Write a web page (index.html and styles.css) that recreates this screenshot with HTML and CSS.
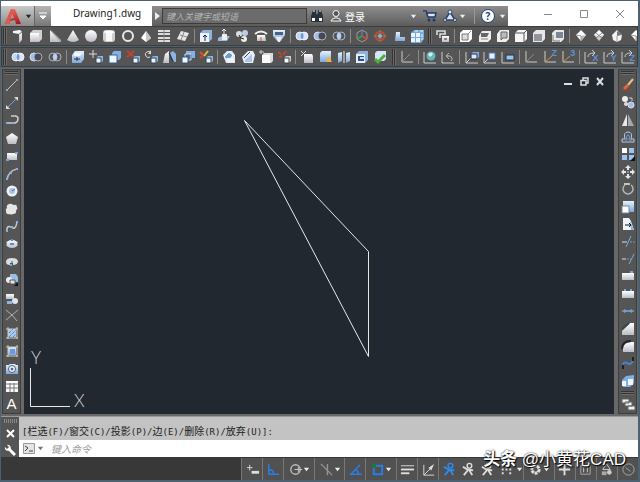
FILE: index.html
```html
<!DOCTYPE html>
<html lang="zh-CN">
<head>
  <meta charset="UTF-8">
  <meta name="viewport" content="width=device-width, initial-scale=1.0">
  <title>Drawing1.dwg</title>
  <link rel="stylesheet" href="styles.css">
</head>
<body>
  <!-- 图标库 -->
  <svg class="sprite" aria-hidden="true">
    <defs>
      <linearGradient id="g" x1="0" y1="0" x2="0" y2="1"><stop offset="0" stop-color="#fff"/><stop offset="1" stop-color="#b9bdc4"/></linearGradient>
      <linearGradient id="b" x1="0" y1="0" x2="0" y2="1"><stop offset="0" stop-color="#e4f1ff"/><stop offset="1" stop-color="#7fa8d8"/></linearGradient>
      <linearGradient id="r" x1="0" y1="0" x2="0" y2="1"><stop offset="0" stop-color="#ef6a5f"/><stop offset="1" stop-color="#a81618"/></linearGradient>
    </defs>
    <!-- 实体 -->
    <symbol id="polysolid" viewBox="0 0 16 16"><path d="M3 3l7-1 2 2v8l-3 3V6L3 5z" fill="url(#g)"/><path d="M9 6l3-2" stroke="#777"/></symbol>
    <symbol id="box" viewBox="0 0 16 16"><path d="M2 5l3-3h9v9l-3 3H2z" fill="#d0d0d0"/><path d="M2 5h9v9H2z" fill="url(#g)"/></symbol>
    <symbol id="wedge" viewBox="0 0 16 16"><path d="M3 2l11 12H3z" fill="url(#g)"/><path d="M3 2l2 1 9 9v2z" fill="#aaa"/></symbol>
    <symbol id="cone" viewBox="0 0 16 16"><path d="M8 2l6 10q-6 4-12 0z" fill="url(#g)"/></symbol>
    <symbol id="sphere" viewBox="0 0 16 16"><circle cx="8" cy="8" r="6" fill="url(#g)"/></symbol>
    <symbol id="cylinder" viewBox="0 0 16 16"><rect x="2" y="2" width="12" height="12" rx="3" fill="#cfcfcf"/><path d="M5 5h6v8H5z" fill="#f8f8f8"/><ellipse cx="8" cy="4" rx="5" ry="1.5" fill="#fff"/></symbol>
    <symbol id="torus" viewBox="0 0 16 16"><circle cx="8" cy="8" r="5" fill="none" stroke="#e8e8e8" stroke-width="2"/></symbol>
    <symbol id="pyramid" viewBox="0 0 16 16"><path d="M8 3l5 7-5 4-5-4z" fill="#fff"/><path d="M8 3l5 7-5 4z" fill="#c6c6c6"/></symbol>
    <symbol id="helix" viewBox="0 0 16 16"><path d="M2 3h12M2 6h12M2 10h12M2 13h12" stroke="#ddd" stroke-width="2"/><path d="M8 2v12" stroke="#888"/></symbol>
    <symbol id="planar" viewBox="0 0 16 16"><path d="M6 3l8 2-4 8-8-2z" fill="#e8e8e8"/><path d="M9 4l-3 8M5 7l7 2" stroke="#888" fill="none"/></symbol>
    <symbol id="extrude" viewBox="0 0 16 16"><path d="M2 5l3-3h9v9l-3 3H2z" fill="#8db4df"/><path d="M2 5h9v9H2z" fill="#e9f4ff"/><path d="M7 13V7M5 9l2-2 2 2" stroke="#224" fill="none"/></symbol>
    <symbol id="presspull" viewBox="0 0 16 16"><path d="M2 10l4-2h8l-3 5H2z" fill="#9dbbe0"/><path d="M6 6h5v6H6z" fill="#eee"/><path d="M8 6V1M6 3l2-2 2 2" stroke="#e8e8e8" fill="none"/></symbol>
    <symbol id="sweep" viewBox="0 0 16 16"><circle cx="5" cy="6" r="3" fill="#ddd"/><circle cx="11" cy="5" r="3" fill="#b8cde6"/><circle cx="10" cy="11" r="3" fill="#eee"/><path d="M5 7q1 4 5 4" stroke="#222" fill="none"/></symbol>
    <symbol id="revolve" viewBox="0 0 16 16"><path d="M2 6q6-5 12 0" stroke="#eee" stroke-width="2" fill="none"/><path d="M4 7h8l1 6H4z" fill="url(#g)"/><path d="M8 9v4" stroke="#db5b3b"/></symbol>
    <symbol id="loft" viewBox="0 0 16 16"><path d="M2 2h12v5l-4 6H6L2 8z" fill="url(#b)"/><path d="M4 4h8v3H4z" fill="#49627f"/><path d="M5 9h6l-2 5H7z" fill="#eee"/></symbol>
    <symbol id="union" viewBox="0 0 16 16"><circle cx="6" cy="8" r="4" fill="#bdd6f3" stroke="#eef"/><circle cx="10" cy="8" r="4" fill="#d7e7fa" stroke="#eef"/><ellipse cx="8" cy="8" rx="1.5" ry="3" fill="#6f9bd0"/></symbol>
    <symbol id="subtract" viewBox="0 0 16 16"><circle cx="6" cy="8" r="4" fill="#9dbfea" stroke="#dde"/><circle cx="10" cy="8" r="4" fill="#444a55" stroke="#aab"/></symbol>
    <symbol id="intersect" viewBox="0 0 16 16"><circle cx="6" cy="8" r="4" fill="none" stroke="#a8b3c8"/><circle cx="10" cy="8" r="4" fill="none" stroke="#a8b3c8"/><ellipse cx="8" cy="8" rx="2" ry="3" fill="#b7d3f5"/></symbol>
    <symbol id="gizmo-move" viewBox="0 0 16 16"><path d="M8 2l5 3v6l-5 3-5-3V5z" fill="none" stroke="#9a9a9a"/><path d="M8 8V3" stroke="#5a8cff"/><path d="M8 8l5 3" stroke="#e04030" stroke-width="2"/><path d="M8 8l-5 3" stroke="#38a048" stroke-width="2"/></symbol>
    <symbol id="gizmo-rotate" viewBox="0 0 16 16"><circle cx="8" cy="8" r="4.500" fill="none" stroke="#d84432" stroke-width="1.500"/><ellipse cx="8" cy="8" rx="6" ry="2.500" fill="none" stroke="#cf4a37"/><path d="M8 2v12M2 8h12" stroke="#4ba35a"/><circle cx="8" cy="8" r="2" fill="#9ac"/></symbol>
    <symbol id="align" viewBox="0 0 16 16"><path d="M6 4h4v5h5v4H5z" fill="url(#b)"/></symbol>
    <symbol id="array3d" viewBox="0 0 16 16"><path d="M2 5l3-3h10v9l-3 4H2z" fill="#79a8dd"/><path d="M2 5h4v4H2zM7 5h4v4H7zM2 10h4v4H2zM7 10h4v4H7z" fill="#eaf4ff"/><path d="M6 3h3M11 3h3M13 6v3M13 10v2" stroke="#dff"/></symbol>
    <!-- 视图 -->
    <symbol id="views" viewBox="0 0 16 16"><path d="M2 7V3h8v3M5 10V6h6" fill="none" stroke="#ddd" stroke-width="1.500"/><path d="M7 8h7v6H7z" fill="url(#g)"/><path d="M9 10h3v2H9z" fill="#888"/></symbol>
    <symbol id="vtop" viewBox="0 0 16 16"><path d="M2 5l3-3h9v9l-3 3H2z" fill="#fff"/><path d="M4 6h6v6H4z" fill="#dcdcdc" stroke="#777"/><path d="M10 6l3-3" stroke="#888"/></symbol>
    <symbol id="vbottom" viewBox="0 0 16 16"><path d="M2 8l3-5h9v8l-3 3H2z" fill="#eee"/><path d="M4 5h8l-2 4H4z" fill="#666"/><path d="M4 11h7" stroke="#888"/></symbol>
    <symbol id="vleft" viewBox="0 0 16 16"><path d="M2 6l3-4h9v9l-3 3H2z" fill="#eee"/><path d="M6 4h6v6H8l-2 2z" fill="#bbb" stroke="#666"/></symbol>
    <symbol id="vfront" viewBox="0 0 16 16"><path d="M2 5l3-3h9v9l-3 3H2z" fill="#f5f5f5"/><path d="M2 5h9v9M11 5l3-3" stroke="#555" fill="none"/></symbol>
    <symbol id="vback" viewBox="0 0 16 16"><path d="M2 5l3-3h9v9l-3 3H2z" fill="#e8e8e8"/><path d="M3 6h8v7H3z" fill="#8f959b"/></symbol>
    <symbol id="vright" viewBox="0 0 16 16"><path d="M2 5l3-3h9v9l-3 3H2z" fill="#e8e8e8"/><path d="M6 4h7v6H6z" fill="#7b8793"/><path d="M3 7v6h7" stroke="#777" fill="none"/></symbol>
    <symbol id="sw" viewBox="0 0 16 16"><path d="M8 2l5 5-5 6-5-6z" fill="#fff"/><path d="M8 8l5-1-5 6z" fill="#b8b8b8"/><path d="M3 7l5 1v5" stroke="#999" fill="none"/></symbol>
    <symbol id="se" viewBox="0 0 16 16"><path d="M8 2l5 5-5 6-5-6z" fill="#ccc"/><path d="M8 2l5 5-5 1-5-1z" fill="#fff"/><path d="M5 5l6 5M11 5l-6 5" stroke="#888"/></symbol>
    <symbol id="ne" viewBox="0 0 16 16"><path d="M8 2l5 5-1 5-4 2-4-2-1-5z" fill="#f3f3f3"/><path d="M8 3v5l5-1-1-2z" fill="#777"/><path d="M8 8v6" stroke="#999"/></symbol>
    <!-- 实体编辑 -->
    <symbol id="facex" viewBox="0 0 16 16"><path d="M2 6l3-4h9v8l-3 4H2z" fill="url(#b)"/><path d="M4 4h8l-2 3H4z" fill="#f4f8ff"/><path d="M4 10h6M7 8v4" stroke="#234"/></symbol>
    <symbol id="facemove" viewBox="0 0 16 16"><path d="M5 1v8M1 5h8" stroke="#ddd"/><path d="M8 9l2-2h5v5l-2 2H8z" fill="#8bb4e4"/><path d="M8 9h5v5H8z" fill="#eef6ff" stroke="#345"/></symbol>
    <symbol id="faceoffset" viewBox="0 0 16 16"><path d="M5 4l2-2h7v7l-2 2H5z" fill="#83b0e6"/><path d="M2 6h8v8H2z" fill="#f0f7ff" stroke="#3f5f86"/></symbol>
    <symbol id="facedel" viewBox="0 0 16 16"><path d="M2 2l7 6M9 2L2 8" stroke="#c0442f" stroke-width="2"/><path d="M8 9l2-2h5v5l-2 2H8z" fill="#8bb4e4"/><path d="M8 9h5v5H8z" fill="#eef6ff" stroke="#345"/></symbol>
    <symbol id="facerot" viewBox="0 0 16 16"><path d="M8 4a3 3 0 1 0-1 4" stroke="#ddd" fill="none"/><path d="M8 1v4H5" fill="#ddd"/><path d="M8 9l2-2h5v5l-2 2H8z" fill="#8bb4e4"/><path d="M8 9h5v5H8z" fill="#eef6ff" stroke="#345"/></symbol>
    <symbol id="facetaper" viewBox="0 0 16 16"><path d="M2 14l2-9 4-3v12z" fill="url(#g)"/><path d="M9 4l4 9h2V5l-3-3z" fill="#8bb4e4"/><path d="M8 4l4 9" stroke="#234"/></symbol>
    <symbol id="facecopy" viewBox="0 0 16 16"><path d="M6 2h9v7h-3V5H6z" fill="#83b0e6"/><path d="M5 5h6v6H5z" fill="#4b6b94" stroke="#cde"/><path d="M2 8h6v6H2z" fill="#f0f7ff" stroke="#357"/></symbol>
    <symbol id="facecolor" viewBox="0 0 16 16"><path d="M2 3l3 3" stroke="#e04d31" stroke-width="2"/><path d="M6 7l4-5" stroke="#e8b93c" stroke-width="2"/><path d="M2 9l3-2" stroke="#d0432c" stroke-width="2"/><path d="M8 9l2-2h5v5l-2 2H8z" fill="#8bb4e4"/><path d="M8 9h5v5H8z" fill="#eef6ff" stroke="#345"/></symbol>
    <symbol id="edgecolor" viewBox="0 0 16 16"><path d="M2 3l3 2M3 8l3-1" stroke="#d0432c" stroke-width="2"/><path d="M7 6l3-4" stroke="#c0442f" stroke-width="2"/><path d="M8 9l2-2h5v5l-2 2H8z" fill="#ccc"/><path d="M8 9h5v5H8z" fill="#fff" stroke="#345"/></symbol>
    <symbol id="edgefillet" viewBox="0 0 16 16"><path d="M2 6l4-4h5l3 4v8H5z" fill="#dbe9fb"/><path d="M3 8l5-5 4 3-4 6z" fill="#6f9dd3" stroke="#fff"/><path d="M6 9h7v4H6z" fill="#f3f3f3"/></symbol>
    <symbol id="edgechamfer" viewBox="0 0 16 16"><path d="M2 8l6-6h5l2 4-2 8H4z" fill="#e5eefa"/><path d="M4 9l6-6" stroke="#345"/><path d="M5 11l7-6v8H5z" fill="#a9c5e8"/></symbol>
    <symbol id="imprint" viewBox="0 0 16 16"><path d="M1 3h5M3 1v4" stroke="#ccc"/><path d="M4 6l2-2h9v8l-2 2H4z" fill="#ddd"/><path d="M4 6h8v8H4z" fill="#fff"/></symbol>
    <symbol id="clean" viewBox="0 0 16 16"><path d="M2 2l5 5M7 2L2 7" stroke="#ddd"/><path d="M5 5h8l1 2v7H5z" fill="url(#g)"/></symbol>
    <symbol id="separate" viewBox="0 0 16 16"><path d="M2 4l2-2h9v9l-2 2H2z" fill="url(#b)"/><path d="M11 7l3 6H8z" fill="#f0b43c"/></symbol>
    <symbol id="section" viewBox="0 0 16 16"><path d="M2 4l4-1v9l-4 2zM10 4l4-1v9l-4 2z" fill="url(#b)"/><path d="M8 2v12" stroke="#eee"/></symbol>
    <symbol id="shell" viewBox="0 0 16 16"><path d="M2 5l3-3h9v9l-3 3H2z" fill="#8db4df"/><path d="M2 5h9v9H2z" fill="#e3effd"/><path d="M4 7h6v5H4z" fill="#2f5385"/><path d="M6 8h4v2H6z" fill="#cde"/></symbol>
    <symbol id="check" viewBox="0 0 16 16"><path d="M3 4l2-2h9v8l-2 2H3z" fill="#d5e6fa"/><path d="M3 10l3 3 7-7" stroke="#4fae3a" stroke-width="3" fill="none"/></symbol>
    <!-- 坐标系 -->
    <symbol id="axes" viewBox="0 0 16 16"><path d="M3 2v11h11" stroke="#ccc" fill="none"/><path d="M3 13l8-8" stroke="#888"/></symbol>
    <symbol id="ucsworld" viewBox="0 0 16 16"><path d="M2 3v11h12" stroke="#ccc" fill="none"/><circle cx="9" cy="7" r="4.500" fill="#64b5bd"/><path d="M6 5q3-3 5 0-2 4-4 2z" fill="#d2f0e6"/></symbol>
    <symbol id="ucsprev" viewBox="0 0 16 16"><path d="M2 3v11h12" stroke="#ccc" fill="none"/><path d="M6 7h4a3 3 0 0 1 1 5M9 4L6 7l3 3" stroke="#bbb" fill="none"/></symbol>
    <symbol id="ucsface" viewBox="0 0 16 16"><path d="M2 3v11h12M2 14l5-5" stroke="#ccc" fill="none"/><path d="M7 5l2-2h6v5l-2 2H7z" fill="#84aee0"/><path d="M7 5h6v5H7z" fill="#d9e9fc" stroke="#234"/></symbol>
    <symbol id="ucsobj" viewBox="0 0 16 16"><path d="M2 3v11h12M2 14l4-4" stroke="#ccc" fill="none"/><path d="M7 4h6v6H7z" fill="#e8f2ff" stroke="#4c80c4"/></symbol>
    <symbol id="ucsview" viewBox="0 0 16 16"><path d="M2 3v11h12" stroke="#ccc" fill="none"/><path d="M6 6h8v5H6z" fill="#98c6f5" stroke="#234"/></symbol>
    <symbol id="ucsz" viewBox="0 0 16 16"><path d="M3 2v11h11" stroke="#ccc" fill="none"/><path d="M3 13l7-6" stroke="#c79838"/></symbol>
    <symbol id="ucsrot" viewBox="0 0 16 16"><path d="M2 3v11h12" stroke="#ccc" fill="none"/><path d="M5 8q0-4 6-4M9 1l3 3-3 3" stroke="#ccc" fill="none"/></symbol>
    <!-- 绘图 -->
    <symbol id="line" viewBox="0 0 16 16"><path d="M3 13L13 3" stroke="#c8c8c8"/><path d="M2 13h2M12 3h2" stroke="#7da7dd" stroke-width="2"/></symbol>
    <symbol id="xline" viewBox="0 0 16 16"><path d="M4 12l8-8" stroke="#6f9fdc"/><path d="M2 14v-4l4 4zM14 2v4l-4-4z" fill="#ddd"/></symbol>
    <symbol id="pline" viewBox="0 0 16 16"><path d="M7 4h4q3 0 3 3t-3 4H3" stroke="#ccc" stroke-width="1.500" fill="none"/><path d="M2 11h2M8 11h2" stroke="#7fb0ec" stroke-width="2"/></symbol>
    <symbol id="polygon" viewBox="0 0 16 16"><path d="M8 3l6 4-2 7H4L2 7z" fill="url(#g)"/></symbol>
    <symbol id="rect" viewBox="0 0 16 16"><path d="M3 5h10v7H3z" fill="url(#g)"/><path d="M2 12h3M11 5h3" stroke="#70a2e2" stroke-width="2"/></symbol>
    <symbol id="arc" viewBox="0 0 16 16"><path d="M3 14Q4 5 13 3" stroke="#bbb" fill="none" stroke-width="1.500"/><path d="M2 13h2M6 7h2M12 3h2" stroke="#7fb0ec" stroke-width="2"/></symbol>
    <symbol id="circle" viewBox="0 0 16 16"><circle cx="8" cy="8" r="5.500" fill="#eef1f6"/><circle cx="8" cy="8" r="3" fill="#a8c4e8"/><path d="M8 8l3-2" stroke="#56a"/></symbol>
    <symbol id="cloud" viewBox="0 0 16 16"><path d="M5 3q3-1 4 1 4-1 4 2 1 3-1 3 1 4-3 4-2 1-3 0-4 1-4-3-1-2 1-3-1-3 2-4z" fill="#e6e6e6"/></symbol>
    <symbol id="spline" viewBox="0 0 16 16"><path d="M3 13q-1-7 4-5 5 4 6-6" stroke="#ccc" stroke-width="1.500" fill="none"/><path d="M2 12h2M6 8h3M12 3h2" stroke="#7fb0ec" stroke-width="2"/></symbol>
    <symbol id="ellipse" viewBox="0 0 16 16"><ellipse cx="8" cy="8" rx="6" ry="4" fill="url(#g)"/><path d="M2 8h1M13 8h1M7 4h2M6 8h4" stroke="#5b8fd2" stroke-width="2"/></symbol>
    <symbol id="earc" viewBox="0 0 16 16"><path d="M2 8q0-4 6-4t6 4q-1 3-5 3V9H6v2Q2 11 2 8z" fill="#ddd"/><path d="M7 8h2M6 11h2" stroke="#78a5df" stroke-width="2"/></symbol>
    <symbol id="insert" viewBox="0 0 16 16"><path d="M6 2h6l2 3v5H6z" fill="#9dbce2"/><circle cx="5" cy="8" r="3" fill="#eee"/><path d="M6 8h5v4H6z" fill="#dfe9f7" stroke="#555"/><path d="M14 10v4h-4z" fill="#111"/></symbol>
    <symbol id="block" viewBox="0 0 16 16"><path d="M2 4h8v5H2z" fill="url(#g)"/><circle cx="11" cy="11" r="3" fill="#dfe6ef"/><path d="M3 11h5v3H3z" fill="#8fb4e3"/></symbol>
    <symbol id="point" viewBox="0 0 16 16"><path d="M2 3l6 5 5 6M14 3L8 8l-6 5" stroke="#a9b2b8" fill="none"/></symbol>
    <symbol id="hatch" viewBox="0 0 16 16"><path d="M4 4h8v8H4z" fill="#aacaf2"/><path d="M2 4h12M2 13h12M4 2v12M13 2v12" stroke="#cfcabc"/><path d="M5 8l4-4M5 12l7-7M9 12l3-3" stroke="#2d5fa8" stroke-dasharray="1 1"/></symbol>
    <symbol id="gradient" viewBox="0 0 16 16"><path d="M4 4h8v8H4z" fill="url(#b)"/><path d="M2 4h12M2 13h12M4 2v12M13 2v12" stroke="#cfcabc"/><path d="M6 6h5v5H6z" fill="#6c9ae0"/></symbol>
    <symbol id="region" viewBox="0 0 16 16"><path d="M2 4h3l1-1h5l1 1h2v9H2z" fill="url(#b)"/><circle cx="8" cy="8" r="3.500" fill="#fff" stroke="#37598a"/><circle cx="8" cy="8" r="1.500" fill="#667"/></symbol>
    <symbol id="table" viewBox="0 0 16 16"><path d="M2 3h12v11H2z" fill="#fafafa"/><path d="M2 6h12M2 10h12M6 5v9M10 5v9" stroke="#777"/></symbol>
    <!-- 修改 -->
    <symbol id="erase" viewBox="0 0 16 16"><path d="M8 8l5-6" stroke="#e9c27c" stroke-width="2"/><path d="M4 12l4-4" stroke="#e36a35" stroke-width="3"/><path d="M2 13h9" stroke="#b43a30"/></symbol>
    <symbol id="copy" viewBox="0 0 16 16"><circle cx="5" cy="5" r="3" fill="#eee"/><circle cx="11" cy="11" r="3" fill="#9dc0ec" stroke="#dde"/><circle cx="6" cy="10" r="2" fill="#ddd"/><path d="M9 4h3v3" stroke="#ccc" fill="none"/></symbol>
    <symbol id="mirror" viewBox="0 0 16 16"><path d="M7 2v12H2z" fill="#e9e9e9"/><path d="M8 2v12h6z" fill="#9fa9b4"/></symbol>
    <symbol id="offset" viewBox="0 0 16 16"><path d="M2 13h12v-3h-3q2-7-3-7T5 10H2z" fill="none" stroke="#b4c8e4"/><path d="M5 11h2q-1-5 1-5t1 5h3" stroke="#77a4df" fill="none"/></symbol>
    <symbol id="array" viewBox="0 0 16 16"><path d="M2 2h5v5H2z" fill="#fff"/><path d="M9 2h5v5H9zM2 9h5v5H2zM9 9h5v5H9z" fill="#9bc3f2"/><path d="M15 10v5h-5z" fill="#111"/></symbol>
    <symbol id="move" viewBox="0 0 16 16"><path d="M8 1l3 3H9v2H7V4H5zM8 15l3-3H9v-2H7v2H5zM1 8l3-3v2h2v2H4v2zM15 8l-3-3v2h-2v2h2v2z" fill="#e6e6e6"/><circle cx="8" cy="8" r="1" fill="#7aa9e2"/></symbol>
    <symbol id="rotate" viewBox="0 0 16 16"><path d="M5 4a5 5 0 1 0 6 0" stroke="#aeb6ba" stroke-width="1.500" fill="none"/><path d="M4 3h6" stroke="#c8c4b0" stroke-width="2"/></symbol>
    <symbol id="scale" viewBox="0 0 16 16"><path d="M3 2h11v11H3z" fill="url(#b)"/><path d="M2 7h7v7H2z" fill="#fff" stroke="#789"/></symbol>
    <symbol id="stretch" viewBox="0 0 16 16"><path d="M3 2h6l2 3 3 9H3z" fill="#eef4fc"/><path d="M10 4l4 10h-3z" fill="#8cb2e3"/><path d="M5 9h6M9 7l2 2-2 2" stroke="#111" fill="none"/></symbol>
    <symbol id="trim" viewBox="0 0 16 16"><path d="M2 8h5" stroke="#ddd"/><path d="M10 8h5" stroke="#7799bb" stroke-dasharray="2 1"/><path d="M6 13l5-11" stroke="#77a9e6"/></symbol>
    <symbol id="extend" viewBox="0 0 16 16"><path d="M2 8h4" stroke="#ddd"/><path d="M7 8h4" stroke="#79a" stroke-dasharray="2 1"/><path d="M9 13l5-10" stroke="#77a9e6"/></symbol>
    <symbol id="breakpt" viewBox="0 0 16 16"><path d="M2 5h12v7H2z" fill="url(#g)"/><path d="M10 4h3" stroke="#77a9e6" stroke-width="2"/></symbol>
    <symbol id="break" viewBox="0 0 16 16"><path d="M2 5h12v7H2z" fill="url(#g)"/><path d="M4 4h2M10 4h2" stroke="#77a9e6" stroke-width="2"/></symbol>
    <symbol id="join" viewBox="0 0 16 16"><path d="M2 8h12" stroke="#bbb"/><path d="M4 6l4 2-4 2zM12 6L8 8l4 2z" fill="#6ba0e6"/></symbol>
    <symbol id="chamfer" viewBox="0 0 16 16"><path d="M2 10l8-8h4v12H2z" fill="url(#g)"/><path d="M2 8l7-6" stroke="#345" stroke-width="2"/></symbol>
    <symbol id="fillet" viewBox="0 0 16 16"><path d="M3 14V10q1-6 8-6h3v10z" fill="url(#g)"/><path d="M2 11q0-8 9-8" stroke="#223" stroke-width="2" fill="none"/></symbol>
    <symbol id="blend" viewBox="0 0 16 16"><path d="M3 11q0-5 4-3 4 3 6-3" stroke="#4683d0" stroke-width="2" fill="none"/><path d="M3 10v4M13 6V2" stroke="#222" stroke-width="2"/></symbol>
    <symbol id="explode" viewBox="0 0 16 16"><path d="M2 7l4-4 8-1v8l-4 4H3z" fill="#82afe3"/><path d="M2 8h4v5H2zM8 6h5v6H8z" fill="#eef6ff"/></symbol>
    <symbol id="order" viewBox="0 0 16 16"><path d="M2 3h7v4H2zM5 6h7v4H5zM8 10h7v4H8z" fill="#eee" stroke="#666"/></symbol>
    <!-- 状态栏 -->
    <symbol id="dyn" viewBox="0 0 16 16"><path d="M2 6h6M5 3v6" stroke="#ddd"/><path d="M7 11h8" stroke="#ddd" stroke-width="3"/></symbol>
    <symbol id="ortho" viewBox="0 0 16 16"><path d="M3 2v11h11M3 8q5 0 5 5" stroke="#2a7de8" stroke-width="1.500" fill="none"/></symbol>
    <symbol id="polar" viewBox="0 0 16 16"><circle cx="8" cy="8" r="5" stroke="#bbb" fill="none" stroke-width="1.500"/><path d="M7 8h8M11 5v6" stroke="#ccc"/></symbol>
    <symbol id="iso" viewBox="0 0 16 16"><path d="M2 2l12 12M9 2v12" stroke="#8e9498" stroke-width="1.500"/></symbol>
    <symbol id="track" viewBox="0 0 16 16"><path d="M13 3L3 13h12M8 8q3 1 3 5" stroke="#2a7de8" stroke-width="1.500" fill="none"/></symbol>
    <symbol id="osnap" viewBox="0 0 16 16"><path d="M4 4h9v9H4z" stroke="#2a7de8" stroke-width="2" fill="none"/><circle cx="4" cy="4" r="2.500" fill="#1d7a36"/></symbol>
    <symbol id="lwt" viewBox="0 0 16 16"><path d="M1 4h14" stroke="#ddd"/><path d="M1 8h14" stroke="#ddd" stroke-width="2"/><path d="M1 12h9" stroke="#ddd" stroke-width="2"/></symbol>
    <symbol id="ducs" viewBox="0 0 16 16"><path d="M3 3v11h11M3 14l7-7" stroke="#ddd" fill="none"/><path d="M14 2l-3 7-3-3z" fill="#ddd"/></symbol>
    <symbol id="man" viewBox="0 0 16 16"><circle cx="9" cy="4" r="2.500" fill="none" stroke="currentColor" stroke-width="1.500"/><path d="M2 5l5 3 6 1M8 8l-5 6M9 9l3 5" stroke="currentColor" stroke-width="2" fill="none"/></symbol>
    <symbol id="scalelist" viewBox="0 0 16 16"><path d="M3 4h2M7 4h2M3 8h2M7 8h2M11 8h2M3 12h2M11 12h2" stroke="#ddd" stroke-width="2"/></symbol>
    <symbol id="gear" viewBox="0 0 16 16"><circle cx="8" cy="8" r="4" fill="none" stroke="#ddd" stroke-width="3" stroke-dasharray="3 1"/><circle cx="8" cy="8" r="3" fill="none" stroke="#ddd"/></symbol>
    <symbol id="plus" viewBox="0 0 16 16"><path d="M2 8h12M8 2v12" stroke="#ddd" stroke-width="2"/></symbol>
    <symbol id="props" viewBox="0 0 16 16"><path d="M3 4h10v9H3z" fill="none" stroke="#aaa"/><path d="M6 6v5M10 6v5" stroke="#ccc"/></symbol>
    <symbol id="isolate" viewBox="0 0 16 16"><path d="M8 2l4 6H4z" fill="none" stroke="#ccc"/><path d="M3 10h5v4H3z" fill="#aaa"/><circle cx="11" cy="11" r="2.500" fill="#ccc"/></symbol>
    <symbol id="perf" viewBox="0 0 16 16"><circle cx="8" cy="8" r="6" fill="none" stroke="#aaa"/><path d="M5 6l5 4" stroke="#aaa"/></symbol>
    <symbol id="down" viewBox="0 0 8 8"><path d="M1 2h6L4 6z" fill="currentColor"/></symbol>
  </svg>

  <div class="app">
    <header class="titlebar">
      <button class="logo" aria-label="菜单">
        <svg width="18" height="18" viewBox="0 0 18 18"><path d="M1 17L7 2h4l6 15h-5l-1-4-5 1-1 3z" fill="url(#r)"/><path d="M8 6l2 5-4 1z" fill="#9d9d9d"/><path d="M1 17L7 2l2 2-4 13z" fill="#e4574b"/></svg>
        <svg class="caret dark"><use href="#down"/></svg>
      </button>
      <button class="quick" aria-label="自定义快速访问工具栏"><svg width="8" height="8" viewBox="0 0 8 8"><path d="M0 1h8M1 4h6L4 7z" stroke="#fff" fill="#fff"/></svg></button>
      <div class="tab">Drawing1.dwg</div>
      <button class="more" aria-label="展开"><svg width="5" height="8" viewBox="0 0 5 8"><path d="M0 0l5 4-5 4z" fill="#eee"/></svg></button>
      <input class="search" type="text" placeholder="键入关键字或短语" aria-label="搜索">
      <button class="tb find" aria-label="查找"><svg width="14" height="14" viewBox="0 0 14 14"><path d="M3 1h3v3l1 2v7H1V7zM11 1H8v3L7 6v7h6V7z" fill="#27313d"/><path d="M2 9h3v3H2zM9 9h3v3H9z" fill="#fff"/><path d="M3 2h2M9 2h2" stroke="#fff"/></svg></button>
      <button class="login"><svg width="14" height="14" viewBox="0 0 14 14"><circle cx="7" cy="4.500" r="3" fill="#555" stroke="#fff"/><path d="M2 12q0-2 4-3h2q4 1 4 3z" fill="#555" stroke="#fff"/></svg>登录</button>
      <svg class="caret push"><use href="#down"/></svg>
      <button class="tb cart" aria-label="应用商店"><svg width="14" height="12" viewBox="0 0 14 12"><path d="M0 1h3l2 6h7l1-4H4" fill="#dfe5ee" stroke="#213a67" stroke-width="1.500"/><circle cx="6" cy="10" r="1.500" fill="#213a67"/><circle cx="11" cy="10" r="1.500" fill="#213a67"/></svg></button>
      <button class="tb a360" aria-label="连接"><svg width="14" height="14" viewBox="0 0 14 14"><path d="M7 3l5 8H2z" fill="#dfe5ee" stroke="#28466e" stroke-width="1.500"/><circle cx="7" cy="3" r="2" fill="#e8edf5" stroke="#28466e"/><circle cx="2" cy="11" r="1.500" fill="#e8edf5" stroke="#28466e"/><circle cx="12" cy="11" r="1.500" fill="#e8edf5" stroke="#28466e"/></svg></button>
      <svg class="caret"><use href="#down"/></svg>
      <span class="divider"></span>
      <button class="help" aria-label="帮助">?</button>
      <svg class="caret"><use href="#down"/></svg>
      <div class="window">
        <button aria-label="最小化"><svg width="10" height="10" viewBox="0 0 10 10"><path d="M1 5.500h8" stroke="#888"/></svg></button>
        <button aria-label="最大化"><svg width="10" height="10" viewBox="0 0 10 10"><path d="M1.500 1.500h7v7h-7z" stroke="#888" fill="none"/></svg></button>
        <button aria-label="关闭"><svg width="10" height="10" viewBox="0 0 10 10"><path d="M1 1l8 8M9 1L1 9" stroke="#888"/></svg></button>
      </div>
    </header>

    <nav class="toolbar long" aria-label="建模">
      <i class="grip"></i>
      <button><svg><use href="#polysolid"/></svg></button><button><svg><use href="#box"/></svg></button><button><svg><use href="#wedge"/></svg></button><button><svg><use href="#cone"/></svg></button><button><svg><use href="#sphere"/></svg></button>
      <button><svg><use href="#cylinder"/></svg></button><button><svg><use href="#torus"/></svg></button><button><svg><use href="#pyramid"/></svg></button><button><svg><use href="#helix"/></svg></button><button><svg><use href="#planar"/></svg></button>
      <i class="sep"></i>
      <button><svg><use href="#extrude"/></svg></button><button><svg><use href="#presspull"/></svg></button><button><svg><use href="#sweep"/></svg></button><button><svg><use href="#revolve"/></svg></button><button><svg><use href="#loft"/></svg></button>
      <i class="sep"></i>
      <button><svg><use href="#union"/></svg></button><button><svg><use href="#subtract"/></svg></button><button><svg><use href="#intersect"/></svg></button>
      <i class="sep"></i>
      <button><svg><use href="#gizmo-move"/></svg></button><button><svg><use href="#gizmo-rotate"/></svg></button><button><svg><use href="#align"/></svg></button><button><svg><use href="#array3d"/></svg></button>
      <i class="grip mid"></i>
      <button><svg><use href="#views"/></svg></button>
      <i class="sep"></i>
      <button><svg><use href="#vtop"/></svg></button><button><svg><use href="#vbottom"/></svg></button><button><svg><use href="#vleft"/></svg></button><button><svg><use href="#vfront"/></svg></button><button><svg><use href="#vback"/></svg></button><button><svg><use href="#vright"/></svg></button>
      <i class="sep"></i>
      <button><svg><use href="#sw"/></svg></button><button><svg><use href="#se"/></svg></button><button><svg><use href="#ne"/></svg></button><button><svg><use href="#sw"/></svg></button>
    </nav>

    <nav class="toolbar" aria-label="实体编辑">
      <i class="grip"></i>
      <button><svg><use href="#union"/></svg></button><button><svg><use href="#subtract"/></svg></button><button><svg><use href="#intersect"/></svg></button>
      <i class="sep"></i>
      <button><svg><use href="#facex"/></svg></button><button><svg><use href="#facemove"/></svg></button><button><svg><use href="#faceoffset"/></svg></button><button><svg><use href="#facedel"/></svg></button>
      <button><svg><use href="#facerot"/></svg></button><button><svg><use href="#facetaper"/></svg></button><button><svg><use href="#facecopy"/></svg></button><button><svg><use href="#facecolor"/></svg></button>
      <i class="sep"></i>
      <button><svg><use href="#edgefillet"/></svg></button><button><svg><use href="#edgechamfer"/></svg></button><button><svg><use href="#imprint"/></svg></button><button><svg><use href="#edgecolor"/></svg></button>
      <i class="sep"></i>
      <button><svg><use href="#clean"/></svg></button><button><svg><use href="#separate"/></svg></button><button><svg><use href="#section"/></svg></button><button><svg><use href="#shell"/></svg></button><button><svg><use href="#check"/></svg></button>
      <i class="grip mid"></i>
      <button><svg><use href="#axes"/></svg></button>
      <i class="sep"></i>
      <button><svg><use href="#ucsworld"/></svg></button><button><svg><use href="#ucsprev"/></svg></button>
      <i class="sep"></i>
      <button><svg><use href="#ucsface"/></svg></button><button><svg><use href="#ucsobj"/></svg></button><button><svg><use href="#ucsview"/></svg></button>
      <i class="sep"></i>
      <button><svg><use href="#axes"/></svg></button><button class="axis"><svg><use href="#ucsz"/></svg><small>Z</small></button><button class="axis"><svg><use href="#ucsz"/></svg><small>3</small></button>
      <i class="sep"></i>
      <button class="axis low"><svg><use href="#ucsrot"/></svg><small>X</small></button><button class="axis low"><svg><use href="#ucsrot"/></svg><small>Y</small></button><button class="axis low"><svg><use href="#ucsrot"/></svg><small>Z</small></button>
    </nav>

    <main class="workspace">
      <nav class="toolbar side" aria-label="绘图">
        <i class="grip"></i>
        <button><svg><use href="#line"/></svg></button>
        <button><svg><use href="#xline"/></svg></button>
        <button><svg><use href="#pline"/></svg></button>
        <button><svg><use href="#polygon"/></svg></button>
        <button><svg><use href="#rect"/></svg></button>
        <button><svg><use href="#arc"/></svg></button>
        <button><svg><use href="#circle"/></svg></button>
        <button><svg><use href="#cloud"/></svg></button>
        <button><svg><use href="#spline"/></svg></button>
        <button><svg><use href="#ellipse"/></svg></button>
        <button><svg><use href="#earc"/></svg></button>
        <button><svg><use href="#insert"/></svg></button>
        <button><svg><use href="#block"/></svg></button>
        <button><svg><use href="#point"/></svg></button>
        <button><svg><use href="#hatch"/></svg></button>
        <button><svg><use href="#gradient"/></svg></button>
        <button><svg><use href="#region"/></svg></button>
        <button><svg><use href="#table"/></svg></button>
        <button class="mtext">A</button>
      </nav>

      <section class="canvas">
        <div class="docbuttons">
          <button aria-label="最小化"><svg width="9" height="9" viewBox="0 0 9 9"><path d="M0 7h8" stroke="#ddd" stroke-width="2"/></svg></button>
          <button aria-label="还原"><svg width="9" height="9" viewBox="0 0 9 9"><path d="M3 3V1h5v5H6" stroke="#ddd" stroke-width="1.500" fill="none"/><path d="M1 3.500h5v4.500H1z" stroke="#ddd" stroke-width="1.500" fill="none"/></svg></button>
          <button aria-label="关闭"><svg width="9" height="9" viewBox="0 0 9 9"><path d="M1 1l6 7M7 1L1 8" stroke="#ddd" stroke-width="2"/></svg></button>
        </div>
        <svg class="drawing" viewBox="0 0 590 345" preserveAspectRatio="xMinYMax meet">
          <path d="M220.500 51.500l124 131v105z" stroke="#e8e8e8" fill="none"/>
          <path d="M6.500 299v38.500H46" stroke="#e8e8e8" fill="none"/>
          <text x="7" y="295" class="ucs">Y</text>
          <text x="50" y="338" class="ucs">X</text>
        </svg>
      </section>

      <nav class="toolbar side" aria-label="修改">
        <i class="grip"></i>
        <button><svg><use href="#erase"/></svg></button>
        <button><svg><use href="#copy"/></svg></button>
        <button><svg><use href="#mirror"/></svg></button>
        <button><svg><use href="#offset"/></svg></button>
        <button><svg><use href="#array"/></svg></button>
        <button><svg><use href="#move"/></svg></button>
        <button><svg><use href="#rotate"/></svg></button>
        <button><svg><use href="#scale"/></svg></button>
        <button><svg><use href="#stretch"/></svg></button>
        <button><svg><use href="#trim"/></svg></button>
        <button><svg><use href="#extend"/></svg></button>
        <button><svg><use href="#breakpt"/></svg></button>
        <button><svg><use href="#break"/></svg></button>
        <button><svg><use href="#join"/></svg></button>
        <button><svg><use href="#chamfer"/></svg></button>
        <button><svg><use href="#fillet"/></svg></button>
        <button><svg><use href="#blend"/></svg></button>
        <button><svg><use href="#explode"/></svg></button>
        <i class="grip"></i>
        <button><svg><use href="#order"/></svg></button>
      </nav>
    </main>

    <section class="command">
      <div class="cmdside">
        <i class="dots"></i>
        <button aria-label="关闭"><svg width="9" height="9" viewBox="0 0 9 9"><path d="M1 1l7 7M8 1L1 8" stroke="#fff" stroke-width="2"/></svg></button>
        <button aria-label="自定义"><svg width="12" height="12" viewBox="0 0 12 12"><path d="M5 5l6 6" stroke="#fff" stroke-width="3"/><path d="M3 1a3 3 0 1 1-2 2l2 2 2-2z" fill="#fff"/></svg></button>
      </div>
      <div class="cmdmain">
        <p class="history"><kbd>[</kbd>栏选<kbd>(F)/</kbd>窗交<kbd>(C)/</kbd>投影<kbd>(P)/</kbd>边<kbd>(E)/</kbd>删除<kbd>(R)/</kbd>放弃<kbd>(U)]:</kbd></p>
        <div class="prompt">
          <svg width="12" height="11" viewBox="0 0 12 11"><path d="M.5.500h11v10H.5z" fill="#e4e4e4" stroke="#999"/><path d="M2 3l3 2-3 3M6 8h4" stroke="#444" fill="none"/></svg>
          <svg class="caret grey"><use href="#down"/></svg>
          <input type="text" placeholder="键入命令" aria-label="命令">
        </div>
      </div>
    </section>

    <footer class="statusbar">
      <div class="status">
        <span><button><svg><use href="#dyn"/></svg></button></span>
        <span><button class="on"><svg><use href="#ortho"/></svg></button></span>
        <span class="wide"><button><svg><use href="#polar"/></svg></button><svg class="caret"><use href="#down"/></svg></span>
        <span class="wide"><button><svg><use href="#iso"/></svg></button><svg class="caret"><use href="#down"/></svg></span>
        <span><button><svg><use href="#track"/></svg></button></span>
        <span class="wide"><button><svg><use href="#osnap"/></svg></button><svg class="caret"><use href="#down"/></svg></span>
        <span><button><svg><use href="#lwt"/></svg></button></span>
        <span><button><svg><use href="#ducs"/></svg></button></span>
        <span class="group"><button class="on"><svg><use href="#man"/></svg></button><button><svg><use href="#man"/></svg></button><button><svg><use href="#man"/></svg></button><button><svg><use href="#scalelist"/></svg></button><svg class="caret"><use href="#down"/></svg></span>
        <span class="wide"><button><svg><use href="#gear"/></svg></button><svg class="caret"><use href="#down"/></svg></span>
        <span><button><svg><use href="#plus"/></svg></button></span>
        <span><button><svg><use href="#props"/></svg></button></span>
        <span><button><svg><use href="#isolate"/></svg></button></span>
        <span><button><svg><use href="#perf"/></svg></button></span>
      </div>
    </footer>
    <div class="watermark"><b>头条</b> @小黄花CAD</div>
  </div>
</body>
</html>
```
FILE: styles.css
```css
* {
  box-sizing: border-box;
}

body {
  margin: 0;
  background: #4d6270;
  font-family: "Noto Sans", "Noto Sans CJK SC", sans-serif;
  font-size: 10px;
}

button {
  display: flex;
  align-items: center;
  justify-content: center;
  margin: 0;
  padding: 0;
  border: none;
  background: none;
  color: #ddd;
  font: inherit;
}

input {
  min-width: 0;
  border: none;
  outline: none;
  font: inherit;
}

svg {
  display: block;
  flex: none;
}

.sprite {
  position: absolute;
  width: 0;
  height: 0;
}

.caret {
  width: 7px;
  height: 7px;
  color: #eee;
}

.caret.dark { color: #222; }
.caret.grey { color: #777; }

.app {
  position: relative;
  display: flex;
  flex-direction: column;
  min-height: 100vh;
  padding: 1px 2px 2px 1px;
  overflow: hidden;
}

/* 标题栏 */
.titlebar {
  display: flex;
  align-items: center;
  height: 25px;
  padding-top: 5px;
  background: linear-gradient(#fff 5px, #8e8e8e 5px, #5c5c5c);
}

.logo {
  gap: 3px;
  width: 33px;
  height: 20px;
  background: linear-gradient(#c9c9c9, #8b8b8b);
}

.quick {
  width: 17px;
  height: 20px;
  border-left: 1px solid #666;
  background: linear-gradient(#b5b5b5, #777);
}

.tab {
  width: 101px;
  height: 25px;
  margin-top: -5px;
  padding-left: 22px;
  background: #fff;
  color: #222;
  line-height: 24px;
  white-space: nowrap;
}

.more {
  width: 10px;
  height: 20px;
}

.search {
  width: 145px;
  height: 16px;
  padding: 0 3px;
  border: 1px solid #3c3c3c;
  background: #6c6c6c;
  color: #fff;
  font-size: 9px;
  font-style: italic;
}

.search::placeholder { color: #b4b4b4; }

.tb { width: 18px; }
.find { margin-left: 1px; }

.login {
  gap: 2px;
  margin-left: 3px;
  color: #fff;
}

.push { margin-left: auto; }
.cart { margin-left: 4px; }
.a360 { margin-left: 2px; }

.divider {
  width: 1px;
  height: 16px;
  margin: 0 6px 0 8px;
  background: #999;
}

.help {
  width: 14px;
  height: 14px;
  margin-right: 4px;
  border: 1px solid #1f3f78;
  border-radius: 50%;
  background: #fff;
  color: #1f3f78;
  font-weight: bold;
}

.window {
  display: flex;
  width: 130px;
  height: 25px;
  margin: -5px 0 0 2px;
  padding-left: 22px;
  background: #fff;
}

.window button {
  width: 36px;
}

/* 工具栏 */
.toolbar {
  display: flex;
  height: 20px;
  margin-bottom: 1px;
  border: 1px solid #3d3d3d;
  background: #555;
  overflow: hidden;
}

.toolbar button {
  flex: 1 0 0;
  min-width: 0;
}

.long button:last-child {
  margin-right: -8px;
}

.toolbar button svg {
  width: 16px;
  height: 16px;
}

.status button svg {
  width: 15px;
  height: 15px;
}

.grip {
  flex: none;
  width: 4px;
  margin: 1px 2px 1px 1px;
  background: repeating-linear-gradient(90deg, #333 0 1px, #6b6b6b 1px 2px);
}

.grip.mid { margin: 1px 2px; }

.sep {
  flex: none;
  width: 1px;
  margin: 2px;
  background: #8a8a8a;
}

/* 坐标轴字母叠在图标上 */
.axis { position: relative; }

.axis small {
  position: absolute;
  top: 1px;
  right: 2px;
  color: #5b91dc;
  font: bold 9px/9px "Liberation Sans", sans-serif;
}

.axis.low small { top: 6px; }

/* 工作区 */
.workspace {
  display: flex;
  flex: 1;
  padding: 1px 1px 2px;
  background: #686868;
}

.side {
  flex-direction: column;
  width: 19px;
  height: auto;
  margin: 0;
}

.side .grip {
  width: auto;
  height: 4px;
  margin: 1px 2px;
  background: repeating-linear-gradient(#333 0 1px, #6b6b6b 1px 2px);
}

.side .mtext {
  color: #fff;
  font: 15px/16px "Liberation Sans", sans-serif;
}

.canvas {
  position: relative;
  flex: 1;
  min-width: 0;
  margin: 0 4px 0 3px;
  background: #212830;
}

.drawing {
  position: absolute;
  width: 100%;
  height: 100%;
}

.ucs {
  fill: #d5d5d5;
  font: 300 17px Lato, sans-serif;
}

.docbuttons {
  position: absolute;
  top: 8px;
  right: 9px;
  display: flex;
  gap: 7px;
}

/* 命令行 */
.command {
  display: flex;
  height: 41px;
  border-top: 1px solid #999;
}

.cmdside {
  display: flex;
  flex-direction: column;
  align-items: center;
  justify-content: space-between;
  width: 18px;
  padding: 2px 0 1px;
  background: #555;
}

.dots {
  width: 13px;
  height: 4px;
  background: repeating-linear-gradient(90deg, #888 0 1px, #555 1px 2px);
}

.cmdmain {
  flex: 1;
  min-width: 0;
  background: #fff;
}

.history {
  height: 23px;
  margin: 0;
  padding: 4px 3px 0;
  background: #c3c3c3;
  color: #222;
  line-height: 20px;
  white-space: nowrap;
}

.history kbd {
  font: 9px/20px "DejaVu Sans Mono", monospace;
}

.prompt {
  display: flex;
  align-items: center;
  gap: 2px;
  height: 17px;
  padding-left: 4px;
}

.prompt input {
  flex: 1;
  height: 17px;
  padding: 0 5px;
  font-style: italic;
}

.prompt input::placeholder { color: #999; }

/* 状态栏 */
.statusbar {
  display: flex;
  justify-content: flex-end;
  height: 23px;
  background: #383838;
}

.status {
  display: flex;
  width: 397px;
  margin-top: 1px;
  background: #515151;
}

.status span {
  display: flex;
  flex: 21 0 0;
  align-items: center;
  justify-content: center;
  border-left: 1px solid #777;
}

.status .wide { flex-grow: 31; }
.status .group { flex-grow: 88; }

.status .group button { width: 19px; }
.status .on { color: #2a8df0; }

/* 水印 */
.watermark {
  position: absolute;
  right: 14px;
  bottom: 10px;
  color: #fff;
  font: 17px/24px "Liberation Sans", "Noto Sans CJK SC", sans-serif;
  text-shadow: 1px 1px 1px #000, 0 0 2px #000;
  white-space: nowrap;
}
```
